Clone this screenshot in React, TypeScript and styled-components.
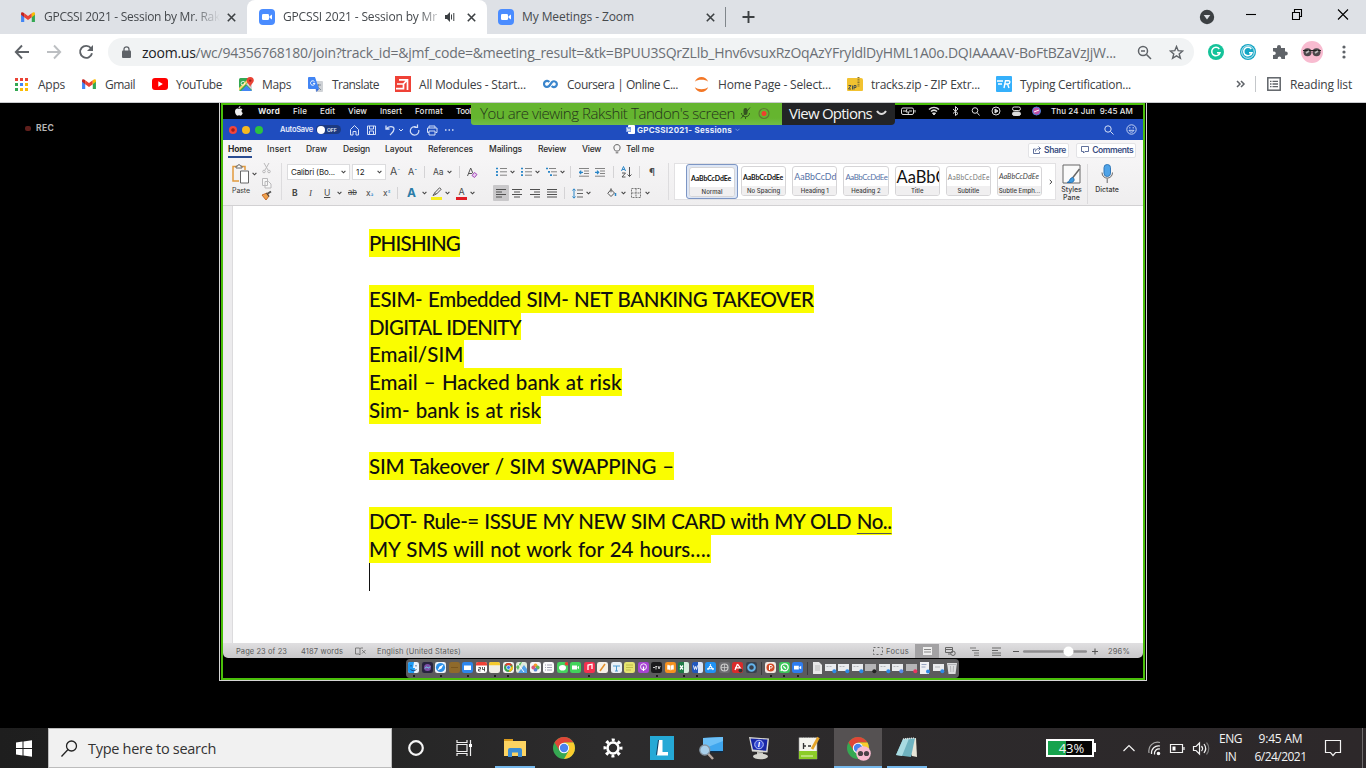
import React, { useLayoutEffect, useRef, useState } from "react";
import styled, { createGlobalStyle } from "styled-components";

const Global = createGlobalStyle`
  * { box-sizing: border-box; }
  html, body { margin: 0; padding: 0; background: #000; overflow: hidden; }
  svg { display: block; flex: none; }
`;

const ui = `"Open Sans", "Noto Sans", sans-serif`;
const mac = `Inter, "Liberation Sans", sans-serif`;

const Page = styled.div`
  width: 1366px;
  height: 768px;
  display: flex;
  flex-direction: column;
  overflow: hidden;
  font-family: ${ui};
  background: #000;
`;

const Slot = styled.div<{ $w: number; $center?: boolean }>`
  width: ${(p) => p.$w}px;
  flex: none;
  display: flex;
  align-items: center;
  justify-content: ${(p) => (p.$center ? "center" : "flex-start")};
`;

const Line = styled.span`
  display: inline-block;
  white-space: pre;
`;

/* One line of text, tracked so that it fills the given width. */
function Fit({ w, children }: { w: number; children: React.ReactNode }) {
  const ref = useRef<HTMLSpanElement>(null);
  const [tracking, setTracking] = useState(0);
  useLayoutEffect(() => {
    const el = ref.current;
    if (!el) return;
    const count = (el.textContent || "").length;
    setTracking((w - el.getBoundingClientRect().width) / count);
  }, [w]);
  return (
    <Line ref={ref} style={{ letterSpacing: tracking }}>
      {children}
    </Line>
  );
}

/* ---------- browser tabs ---------- */

const TabStrip = styled.div`
  height: 34px;
  flex: none;
  display: flex;
  background: #dee1e6;
  font-size: 12px;
  color: #45494d;
`;

const Tab = styled.div<{ $w: number; $pad: number; $active?: boolean }>`
  width: ${(p) => p.$w}px;
  padding-left: ${(p) => p.$pad}px;
  flex: none;
  display: flex;
  align-items: center;
  background: ${(p) => (p.$active ? "#fff" : "transparent")};
  border-radius: 8px 8px 0 0;
`;

const TabTitle = styled.div<{ $w: number; $fade?: boolean }>`
  width: ${(p) => p.$w}px;
  flex: none;
  overflow: hidden;
  line-height: 18px;
  ${(p) => p.$fade && "mask-image: linear-gradient(90deg, #000 84%, transparent);"}
`;

const WindowButtons = styled.div`
  margin-left: auto;
  display: flex;
  align-items: center;
  width: 167px;
`;

const GmailIcon = ({ s = 14 }: { s?: number }) => (
  <svg width={s} height={s * 0.78} viewBox="0 0 14 11">
    <path d="M0 1.5V10a1 1 0 0 0 1 1h2.2V4z" fill="#4285f4" />
    <path d="M14 1.5V10a1 1 0 0 1-1 1h-2.2V4z" fill="#34a853" />
    <path d="M3.2 1.2 7 4.1l3.8-2.9v4L7 8 3.2 5.200z" fill="#ea4335" />
    <path d="M0 1.500C0 0 1.600-.4 3.200 1.200v4L0 2.800z" fill="#c5221f" />
    <path d="M14 1.500C14 0 12.400-.4 10.800 1.200v4L14 2.800z" fill="#fbbc04" />
  </svg>
);

const ZoomIcon = () => (
  <svg width="16" height="16" viewBox="0 0 16 16">
    <rect width="16" height="16" rx="4" fill="#4a8cff" />
    <rect x="3" y="5" width="7" height="6" rx="1.3" fill="#fff" />
    <path d="M10.500 7.300 13 5.400v5.200l-2.500-1.900z" fill="#fff" />
  </svg>
);

const CloseIcon = () => (
  <svg width="9" height="9" viewBox="0 0 9 9" stroke="#3c4043" strokeWidth="1.6">
    <path d="M.8.8l7.400 7.400M8.200.8.8 8.200" />
  </svg>
);

function Tabs() {
  return (
    <TabStrip>
      <Tab $w={247} $pad={21}>
        <Slot $w={23}><GmailIcon /></Slot>
        <TabTitle $w={176} $fade><Fit w={176}>GPCSSI 2021 - Session by Mr. Rak</Fit></TabTitle>
        <Slot $w={22} $center><CloseIcon /></Slot>
      </Tab>
      <Tab $w={240} $pad={12} $active>
        <Slot $w={24}><ZoomIcon /></Slot>
        <TabTitle $w={162} $fade><Fit w={154}>GPCSSI 2021 - Session by Mr</Fit></TabTitle>
        <Slot $w={22}>
          <svg width="11" height="10" viewBox="0 0 11 10" fill="#3c4043">
            <path d="M0 3h2l3-3v10L2 7H0z" />
            <path d="M6.500 2.500v5M8.800 1v8" stroke="#3c4043" />
          </svg>
        </Slot>
        <CloseIcon />
      </Tab>
      <Tab $w={238} $pad={11}>
        <Slot $w={24}><ZoomIcon /></Slot>
        <TabTitle $w={184}><Fit w={112}>My Meetings - Zoom</Fit></TabTitle>
        <CloseIcon />
      </Tab>
      <Slot $w={17}>
        <svg width="2" height="20"><path d="M.5 0v20" stroke="#80868b" /></svg>
      </Slot>
      <svg width="13" height="34" viewBox="0 0 13 34" stroke="#3c4043" strokeWidth="1.900">
        <path d="M.5 17h12M6.500 11v12" />
      </svg>
      <WindowButtons>
        <Slot $w={38}>
          <svg width="16" height="16" viewBox="0 0 16 16">
            <circle cx="8" cy="8" r="7.200" fill="#3c4043" />
            <path d="M4.700 6h6.600L8 10.500z" fill="#dee1e6" />
          </svg>
        </Slot>
        <svg width="120" height="34" viewBox="0 0 120 34" fill="none" stroke="#000" strokeWidth="1.100">
          <path d="M9 14.500h10" />
          <path d="M55.500 12.500h7v7h-7zM57.500 12V9.500h7v7h-2" />
          <path d="M101 9.500l10 10M111 9.500l-10 10" />
        </svg>
      </WindowButtons>
    </TabStrip>
  );
}

/* ---------- address bar ---------- */

const AddressRow = styled.div`
  height: 36px;
  flex: none;
  display: flex;
  align-items: center;
  background: #fff;
  padding-left: 14px;
`;

const Omnibox = styled.div`
  width: 1086px;
  height: 28px;
  flex: none;
  border-radius: 14px;
  background: #f1f3f4;
  display: flex;
  align-items: center;
  padding-left: 14px;
  font-size: 14px;
  color: #6b6f74;
  margin-right: 14px;
`;
const Host = styled.span`color: #202124;`;

function AddressBar() {
  return (
    <AddressRow>
      <Slot $w={94}>
        <svg width="80" height="16" viewBox="0 0 80 16" fill="none" strokeWidth="1.900">
          <path d="M15 8H2M8 1.500 1.800 8 8 14.500" stroke="#5f6368" />
          <path d="M33 8h13M40 1.500 46.200 8 40 14.500" stroke="#bcbfc2" />
          <path d="M77 4.300A6 6 0 1 0 78 9.200" stroke="#5f6368" />
          <path d="M79 1v6h-6z" fill="#5f6368" />
        </svg>
      </Slot>
      <Omnibox>
        <Slot $w={20}>
          <svg width="9" height="12" viewBox="0 0 9 12">
            <path d="M2 5V3.300a2.500 2.500 0 0 1 5 0V5" fill="none" stroke="#5f6368" strokeWidth="1.300" />
            <rect y="4.500" width="9" height="7.500" rx="1" fill="#5f6368" />
          </svg>
        </Slot>
        <Slot $w={995}>
          <Fit w={974}>
            <Host>zoom.us</Host>/wc/94356768180/join?track_id=&amp;jmf_code=&amp;meeting_result=&amp;tk=BPUU3SQrZLlb_Hnv6vsuxRzOqAzYFryldlDyHML1A0o.DQIAAAAV-BoFtBZaVzJjW...
          </Fit>
        </Slot>
        <Slot $w={32}>
          <svg width="15" height="15" viewBox="0 0 15 15" fill="none" stroke="#5f6368" strokeWidth="1.500">
            <circle cx="6" cy="6" r="4.500" />
            <path d="M9.500 9.500 14 14M4 6h4" />
          </svg>
        </Slot>
        <svg width="15" height="15" viewBox="0 0 15 15" fill="none" stroke="#5f6368" strokeWidth="1.400">
          <path d="m7.500 1.500 1.700 4.200 4.500.3-3.500 2.900 1.200 4.400-3.900-2.400-3.900 2.400 1.200-4.400L1.300 6l4.500-.3z" />
        </svg>
      </Omnibox>
      <Slot $w={32}><Grammarly color="#15c39a" /></Slot>
      <Slot $w={32}><Grammarly color="#14a5c4" ring /></Slot>
      <Slot $w={29}>
        <svg width="16" height="16" viewBox="0 0 16 16" fill="#5f6368">
          <path d="M1 4h4V3a2 2 0 0 1 4 0v1h4v3.600h.8a2 2 0 0 1 0 4H13V15H9.300v-.8a1.800 1.800 0 0 0-3.600 0v.8H1v-4h1a1.800 1.800 0 0 0 0-3.600H1z" />
        </svg>
      </Slot>
      <Slot $w={41}>
        <svg width="22" height="22" viewBox="0 0 22 22">
          <circle cx="11" cy="11" r="11" fill="#f8bbd0" />
          <circle cx="6.500" cy="11.300" r="4" fill="#4c474b" />
          <circle cx="15.500" cy="11.300" r="4" fill="#4c474b" />
          <path d="M2 9.500h18" stroke="#222" />
          <path d="m5 12 3-2M14 12l3-2" stroke="#bbb" strokeWidth="1.700" />
        </svg>
      </Slot>
      <svg width="4" height="16" viewBox="0 0 4 16" fill="#5f6368">
        <circle cx="2" cy="3" r="1.600" /><circle cx="2" cy="8" r="1.600" /><circle cx="2" cy="13" r="1.600" />
      </svg>
    </AddressRow>
  );
}

const Grammarly = ({ color, ring }: { color: string; ring?: boolean }) => (
  <svg width="16" height="16" viewBox="0 0 16 16" fill="none" stroke="#fff">
    <circle cx="8" cy="8" r="8" fill={color} stroke="none" />
    {ring && <circle cx="8" cy="8" r="6.300" strokeWidth=".8" />}
    <path d="M11.300 5A4.200 4.200 0 1 0 12 8.700H9" strokeWidth="1.500" />
  </svg>
);

/* ---------- bookmarks ---------- */

const BookmarkRow = styled.div`
  height: 33px;
  flex: none;
  display: flex;
  align-items: center;
  background: #fff;
  border-bottom: 1px solid #c9cbce;
  padding: 0 0 4px 15px;
  font-size: 12px;
  color: #3c4043;
`;

const BmIcon = ({ kind }: { kind: string }) => {
  switch (kind) {
    case "apps":
      return (
        <svg width="13" height="13" viewBox="0 0 13 13">
          {["#ea4335", "#ea4335", "#ea4335", "#34a853", "#4285f4", "#fbbc04", "#34a853", "#fbbc04", "#fbbc04"].map((c, i) => (
            <rect key={i} x={(i % 3) * 5} y={Math.floor(i / 3) * 5} width="3" height="3" fill={c} />
          ))}
        </svg>
      );
    case "gmail":
      return <GmailIcon />;
    case "yt":
      return (
        <svg width="16" height="12" viewBox="0 0 16 12"><rect width="16" height="12" rx="3" fill="#f00" /><path d="M6.300 3.300v5.400L10.800 6z" fill="#fff" /></svg>
      );
    case "maps":
      return (
        <svg width="15" height="15" viewBox="0 0 15 15">
          <rect y="1" width="13" height="13" rx="1.500" fill="#34a853" />
          <path d="M13 4v9L7 7z" fill="#d5d8dc" /><path d="M2 14 7.500 8.500 13 14z" fill="#4285f4" />
          <path d="M0 12.500 11 1.500" stroke="#fdd663" strokeWidth="2" />
          <path d="M11.200 0a3.600 3.600 0 0 1 3.600 3.600c0 2-2.300 3-3.600 6.400-1.300-3.400-3.600-4.400-3.600-6.400A3.600 3.600 0 0 1 11.200 0z" fill="#ea4335" />
          <circle cx="11.200" cy="3.600" r="1.200" fill="#9c2219" />
          <path d="M5.500 4.500H4a1.800 1.800 0 1 0 1.500 1" stroke="#fff" fill="none" strokeWidth=".8" />
        </svg>
      );
    case "translate":
      return (
        <svg width="15" height="15" viewBox="0 0 15 15">
          <path d="M5 4h9a1 1 0 0 1 1 1v9a1 1 0 0 1-1 1H8z" fill="#cfd2d6" />
          <path d="M8 8h5M10.500 7v1c0 2-1.500 3-2 3.500M9 9l4 4" stroke="#7b8791" fill="none" strokeWidth=".9" />
          <path d="M1 0h6l4 12H1a1 1 0 0 1-1-1V1a1 1 0 0 1 1-1z" fill="#4285f4" />
          <path d="M6.500 4.700A2.200 2.200 0 1 0 6.900 6.400H5" stroke="#fff" fill="none" strokeWidth="1" />
          <path d="M8 12h3l-2.500 3z" fill="#3367d6" />
        </svg>
      );
    case "modules":
      return (
        <svg width="16" height="16" viewBox="0 0 16 16"><rect width="16" height="16" fill="#ef4136" /><path d="M4 3.800h8.500V14M12 4.200 8.500 8H2M8.500 8v4.700H1" stroke="#fff" fill="none" strokeWidth="1.700" /></svg>
      );
    case "coursera":
      return (
        <svg width="15" height="10" viewBox="0 0 15 10" fill="none" stroke="#3a85cc" strokeWidth="2.200"><path d="M6.300 3A3 3 0 1 0 6 7.200L9 3A2.900 2.900 0 1 1 8.700 7" /></svg>
      );
    case "jupyter":
      return (
        <svg width="15" height="15" viewBox="0 0 15 15" fill="#f37726"><path d="M.8 4.800C3-1.500 12-1.500 14.200 4.800 11 2.200 4 2.200.8 4.800zM.8 10.200c2.200 6.300 11.200 6.300 13.400 0-3.200 2.600-10.200 2.600-13.400 0z" /></svg>
      );
    case "zip":
      return (
        <svg width="16" height="14" viewBox="0 0 16 14"><path d="M0 2a1 1 0 0 1 1-1h13a2 2 0 0 1 2 2v10a1 1 0 0 1-1 1H1a1 1 0 0 1-1-1z" fill="#f2c230" /><path d="M11.500 0v10" stroke="#8d7830" strokeWidth="2" strokeDasharray="1 .7" /><path d="M1.500 8.500H4L1.500 12H4M5.500 8.500v4M7 12.500v-4h2v2H7" stroke="#49524f" strokeWidth="1" fill="none" /></svg>
      );
    default:
      return (
        <svg width="16" height="16" viewBox="0 0 16 16"><rect width="16" height="16" rx="1" fill="#35b0fb" /><path d="M1 5h6M2 8h4M8 12l1.500-7.300h3c2 0 1.800 3-.5 3.300H9.500M11.500 8l1.500 4" stroke="#fff" strokeWidth="1.400" fill="none" /></svg>
      );
  }
};

const bookmarks: [string, number, string, number, number][] = [
  ["apps", 23, "Apps", 27, 44],
  ["gmail", 23, "Gmail", 30, 47],
  ["yt", 24, "YouTube", 46, 63],
  ["maps", 23, "Maps", 29, 46],
  ["translate", 24, "Translate", 47, 63],
  ["modules", 24, "All Modules - Start...", 107, 124],
  ["coursera", 24, "Coursera | Online C...", 111, 127],
  ["jupyter", 24, "Home Page - Select...", 113, 129],
  ["zip", 24, "tracks.zip - ZIP Extr...", 109, 125],
  ["typing", 24, "Typing Certification...", 111, 216],
];

function Bookmarks() {
  return (
    <BookmarkRow>
      {bookmarks.map(([kind, iw, text, w, next]) => (
        <React.Fragment key={kind}>
          <Slot $w={iw}><BmIcon kind={kind} /></Slot>
          <Slot $w={next}><Fit w={w}>{text}</Fit></Slot>
        </React.Fragment>
      ))}
      <Slot $w={19}>
        <svg width="10" height="8" viewBox="0 0 10 8" fill="none" stroke="#5f6368" strokeWidth="1.500"><path d="m1 1 3 3-3 3M5 1l3 3-3 3" /></svg>
      </Slot>
      <Slot $w={12}><svg width="1" height="16"><rect width="1" height="16" fill="#c4c7ca" /></svg></Slot>
      <Slot $w={23}>
        <svg width="14" height="14" viewBox="0 0 14 14" fill="none" stroke="#5f6368" strokeWidth="1.500"><rect x=".8" y=".8" width="12.400" height="12.400" /><path d="M3 4.300h1.500M5.500 4.300H11M3 7h1.500M5.500 7H11M3 9.700h1.500M5.500 9.700H11" strokeWidth="1.300" /></svg>
      </Slot>
      <Fit w={62}>Reading list</Fit>
    </BookmarkRow>
  );
}

/* ---------- shared screen ---------- */

const Stage = styled.main`
  height: 625px;
  flex: none;
  display: flex;
  background: #000;
`;

const RecColumn = styled.div`
  width: 219px;
  flex: none;
  padding: 19px 0 0 25px;
  display: flex;
  align-items: flex-start;
  gap: 5px;
  font: 700 8.500px/13px ${mac};
  color: #b5b5b5;
`;
const RecDot = styled.i`
  width: 6px;
  height: 5px;
  margin-top: 4px;
  border-radius: 2px;
  background: #5f1f1c;
`;

const Frame = styled.section`
  position: relative;
  width: 928px;
  height: 578px;
  border: 1px solid #d5d5d5;
  border-top: 0;
  padding: 0 1px;
`;
const GreenEdge = styled.div`
  height: 577px;
  border: 2px solid #4abf0a;
  display: flex;
  flex-direction: column;
  overflow: hidden;
  font-family: ${mac};
`;

const MenuBar = styled.div`
  height: 14px;
  flex: none;
  display: flex;
  align-items: center;
  padding: 0 0 2px 12px;
  font-size: 8px;
  font-weight: 500;
  color: #e8e8e8;
  background: #000;
`;
const Strong = styled.b`font-weight: 700;`;

const Banner = styled.div`
  position: absolute;
  left: 251px;
  top: 0;
  height: 22px;
  display: flex;
  font: 400 15px/18px ${ui};
`;
const Viewing = styled.div`
  width: 311px;
  display: flex;
  align-items: center;
  padding: 0 0 3px 9px;
  background: linear-gradient(#65b52f, #65b52f 68%, #70bd47);
  color: #24331c;
  font-weight: 300;
  border-radius: 0 0 0 3px;
`;
const ViewOptions = styled.div`
  width: 113px;
  display: flex;
  align-items: center;
  padding: 0 0 3px 7px;
  background: #232426;
  color: #f4f4f4;
  border-radius: 0 0 4px 0;
`;

const TitleBar = styled.div`
  height: 21px;
  flex: none;
  display: flex;
  align-items: center;
  padding-left: 6px;
  background: #1f4dbf;
  color: #e8eefb;
  font-size: 7.500px;
  font-weight: 600;
`;
const Light = styled.i<{ $c: string }>`
  width: 8px;
  height: 8px;
  margin-right: 5px;
  flex: none;
  border-radius: 50%;
  background: ${(p) => p.$c};
`;
const DocTitle = styled.b`
  font-size: 8px;
  font-weight: 700;
`;
const Toggle = styled.div`
  width: 25px;
  height: 9px;
  border-radius: 5px;
  background: #1d3a80;
  display: flex;
  align-items: center;
  gap: 2px;
  padding-left: 1px;
  font-size: 5px;
  &::before { content: ""; width: 8px; height: 8px; border-radius: 50%; background: #fff; }
`;

const RibbonTabs = styled.div`
  height: 18px;
  flex: none;
  display: flex;
  align-items: center;
  padding-left: 5px;
  background: #f6f5f6;
  color: #2c2c2c;
  font-size: 8.500px;
  font-weight: 500;
`;
const ActiveTab = styled.div`
  height: 18px;
  display: flex;
  align-items: center;
  border-bottom: 2px solid #2b4d92;
  padding-top: 1px;
  font-weight: 700;
`;
const RibbonButton = styled.div<{ $w: number }>`
  width: ${(p) => p.$w}px;
  height: 15px;
  margin: 2px 7px 0 0;
  padding-left: 4px;
  display: flex;
  align-items: center;
  gap: 3px;
  border: 1px solid #e3e3e6;
  border-radius: 2px;
  background: #fff;
  color: #3a4e83;
  font-weight: 600;
`;

const Ribbon = styled.div`
  height: 48px;
  flex: none;
  display: flex;
  background: linear-gradient(#f6f5f6, #efeeef);
  border-bottom: 1px solid #d2d1d3;
  color: #3b3b3b;
`;
const GroupRule = styled.div`
  width: 1px;
  height: 37px;
  margin-top: 5px;
  flex: none;
  background: #dddcde;
`;
const Group = styled.div<{ $w: number; $pad?: number }>`
  width: ${(p) => p.$w}px;
  flex: none;
  padding: 6px 0 0 ${(p) => p.$pad || 0}px;
  display: flex;
  flex-direction: column;
  gap: 5px;
`;
const ToolRow = styled.div`
  height: 16px;
  display: flex;
  align-items: center;
`;
const Select = styled.div<{ $w: number }>`
  width: ${(p) => p.$w}px;
  height: 16px;
  flex: none;
  margin-right: 2px;
  padding: 0 3px;
  display: flex;
  align-items: center;
  justify-content: space-between;
  border: 1px solid #dcdcde;
  background: #fff;
  font-size: 8px;
  color: #222;
`;
const Glyph = styled.span<{ $size?: number; $bold?: boolean; $italic?: boolean; $line?: string; $color?: string }>`
  font-size: ${(p) => p.$size || 9}px;
  line-height: 10px;
  font-weight: ${(p) => (p.$bold ? 700 : 400)};
  font-style: ${(p) => (p.$italic ? "italic" : "normal")};
  font-family: ${(p) => (p.$italic ? '"Liberation Serif", serif' : "inherit")};
  text-decoration: ${(p) => p.$line || "none"};
  color: ${(p) => p.$color || "#484848"};
`;
const Underbar = styled.div<{ $c: string }>`
  width: 11px;
  height: 13px;
  display: flex;
  justify-content: center;
  border-bottom: 3px solid ${(p) => p.$c};
`;
const PasteBox = styled.div`
  width: 28px;
  padding: 1px 0 0 1px;
  font-size: 7px;
  display: flex;
  flex-direction: column;
  gap: 2px;
`;
const PasteGroup = styled.div`
  width: 58px;
  flex: none;
  display: flex;
  padding: 5px 0 0 8px;
`;
const Pressed = styled.div`
  width: 16px;
  height: 16px;
  margin-right: 3px;
  display: flex;
  align-items: center;
  justify-content: center;
  background: #c9c8ca;
  border-radius: 1px;
`;

const Gallery = styled.div`
  width: 382px;
  height: 37px;
  margin: 5px 0 0 5px;
  flex: none;
  display: flex;
  align-items: center;
  background: #fff;
  border: 1px solid #e2e1e3;
  padding-left: 11px;
`;
const StyleCell = styled.div<{ $on?: boolean }>`
  width: ${(p) => (p.$on ? 52 : 51.200)}px;
  height: 35px;
  flex: none;
  padding: 2px ${(p) => (p.$on ? 2 : 3)}px;
  border: ${(p) => (p.$on ? "1px solid #7d96c4" : "0")};
  border-radius: 3px;
  background: ${(p) => (p.$on ? "#dde6f5" : "transparent")};
`;
const StyleCard = styled.div`
  height: 30px;
  display: flex;
  flex-direction: column;
  border: 1px solid #d6d5d7;
  border-radius: 3px;
  overflow: hidden;
  background: #fff;
`;
const Sample = styled.div<{ $size: number; $color: string; $italic?: boolean; $bold?: boolean }>`
  flex: 1;
  padding-left: 1px;
  display: flex;
  align-items: center;
  white-space: nowrap;
  overflow: hidden;
  line-height: 18px;
  font-family: Lato, sans-serif;
  font-weight: ${(p) => (p.$bold ? 700 : 400)};
  font-size: ${(p) => p.$size}px;
  font-style: ${(p) => (p.$italic ? "italic" : "normal")};
  color: ${(p) => p.$color};
`;
const StyleName = styled.div`
  height: 9px;
  background: #f0eff0;
  text-align: center;
  font: 500 6px/9px ${mac};
  white-space: nowrap;
`;
const Tall = styled.div<{ $w: number; $line?: boolean }>`
  width: ${(p) => p.$w}px;
  height: 40px;
  margin-top: 6px;
  flex: none;
  display: flex;
  flex-direction: column;
  align-items: center;
  gap: 2px;
  border-left: ${(p) => (p.$line ? "1px solid #dcdbdd" : "0")};
  font: 500 7px/8px ${mac};
  text-align: center;
`;

const Chev = () => (
  <svg width="5" height="4" viewBox="0 0 5 4" fill="none" stroke="#444" strokeWidth="1.100"><path d="m.6.8 1.900 2L4.400.8" /></svg>
);
const Sep = () => <svg width="1" height="12"><rect width="1" height="12" fill="#d4d3d5" /></svg>;

const Lines = ({ kind }: { kind: "left" | "center" | "right" | "full" }) => {
  const d = {
    left: "M0 .5h10M0 3h6M0 5.500h10M0 8h6",
    center: "M0 .5h10M2 3h6M0 5.500h10M2 8h6",
    right: "M0 .5h10M4 3h6M0 5.500h10M4 8h6",
    full: "M0 .5h10M0 3h10M0 5.500h10M0 8h10",
  }[kind];
  return <svg width="10" height="9" viewBox="0 0 10 9" stroke="#505050"><path d={d} /></svg>;
};
const ListIcon = ({ stepped }: { stepped?: boolean }) => (
  <svg width="11" height="10" viewBox="0 0 11 10">
    <path d={stepped ? "M0 1.500h2M2 4.800h2M4 8.200h2" : "M0 1.500h2M0 4.800h2M0 8.200h2"} stroke="#2a86c8" strokeWidth="1.700" />
    <path d={stepped ? "M3 1.500h7M5 4.800h6M7 8.200h4" : "M4 1.500h7M4 4.800h7M4 8.200h7"} stroke="#777" strokeWidth=".9" />
  </svg>
);
const IndentIcon = ({ flip }: { flip?: boolean }) => (
  <svg width="10" height="9" viewBox="0 0 10 9" fill="none">
    <path d="M0 .5h10M5 3h5M5 5.500h5M0 8.200h10" stroke="#777" strokeWidth=".9" />
    <path d={flip ? "M0 4.300h3.500M2 2.600l1.700 1.700L2 6" : "M4 4.300H.5M2.200 2.600.5 4.300 2.200 6"} stroke="#2a86c8" strokeWidth="1.200" />
  </svg>
);

/* ---------- document ---------- */

const DocArea = styled.div`
  height: 437px;
  flex: none;
  display: flex;
  background: #ecebed;
  padding-left: 9px;
`;
const Paper = styled.div`
  flex: 1;
  padding: 23px 0 0 136px;
  background: #fff;
  border-left: 1px solid #dcdbdd;
  font-family: Lato, "Liberation Sans", sans-serif;
  font-size: 20.500px;
  font-weight: 500;
  word-spacing: 1px;
  color: #101010;
`;
const Para = styled.div`
  height: 27.850px;
  display: flex;
`;
const Mark = styled.span`
  height: 27.850px;
  line-height: 29px;
  background: #fafd00;
`;
const Under = styled.u`
  text-decoration-thickness: 1px;
  text-decoration-color: #555;
  text-underline-offset: 4px;
`;
const Caret = styled.div`
  width: 1px;
  height: 28px;
  background: #111;
`;

const docLines: [React.ReactNode, number][] = [
  ["PHISHING", 91],
  [null, 0],
  ["ESIM- Embedded SIM- NET BANKING TAKEOVER", 444.5],
  ["DIGITAL IDENITY", 152],
  ["Email/SIM", 94.5],
  ["Email – Hacked bank at risk", 252.5],
  ["Sim- bank is at risk", 172],
  [null, 0],
  ["SIM Takeover / SIM SWAPPING –", 305],
  [null, 0],
  [<>DOT- Rule-= ISSUE MY NEW SIM CARD with MY OLD <Under>No..</Under></>, 522.5],
  ["MY SMS will not work for 24 hours….", 341.5],
];

const StatusBar = styled.div`
  height: 15px;
  flex: none;
  display: flex;
  align-items: center;
  padding: 1px 0 0 13px;
  background: linear-gradient(#e0dfe1, #c8c7c9);
  border-radius: 0 0 5px 5px;
  font-size: 7.500px;
  color: #5a5a5a;
`;
const StatusOn = styled.div`
  width: 24px;
  height: 14px;
  margin-left: 6px;
  display: flex;
  align-items: center;
  justify-content: center;
  background: #a3a2a4;
`;

const Dock = styled.div`
  width: 553px;
  height: 19px;
  margin: 1px 0 0 183px;
  flex: none;
  display: flex;
  align-items: center;
  padding-left: 1px;
  border-radius: 4px;
  background: #5b5b5d;
`;
const DockCell = styled.div<{ $dot?: boolean }>`
  width: 13.500px;
  height: 19px;
  flex: none;
  display: flex;
  flex-direction: column;
  align-items: center;
  padding-top: 3px;
  gap: 2px;
  &::after {
    content: "";
    width: 2px;
    height: 2px;
    border-radius: 50%;
    background: ${(p) => (p.$dot ? "#0a0a0a" : "transparent")};
  }
`;
const DockSep = styled.i<{ $w: number }>`
  width: ${(p) => p.$w}px;
  height: 13px;
  flex: none;
  background: linear-gradient(#3c3c3e, #3c3c3e) center / 1px 100% no-repeat;
`;

type DockArt = [string, string, React.ReactNode, boolean?];
const w1 = { fill: "none", stroke: "#fff", strokeWidth: 1.3 };
const dockApps: DockArt[] = [
  ["finder", "#e8f1fb", <><path d="M0 2a2 2 0 0 1 2-2h4L5 6h2l-1 5H2a2 2 0 0 1-2-2z" fill="#1d9bf6" /><path d="M3 3v1.500M8 3v1.500M2.500 7.500c2 1.500 4 1.500 6 0" stroke="#1b3560" fill="none" strokeWidth=".8" /></>, true],
  ["siri", "#28233f", <><circle cx="5.500" cy="5.500" r="3.500" fill="#7c4fa8" /><path d="M3 6.500c2-4 3 2 5-2" stroke="#6fe3f0" fill="none" /></>],
  ["safari", "#eef4fb", <><circle cx="5.500" cy="5.500" r="4.600" fill="#2b8fe8" /><path d="m8.500 2.500-2 4-4 2 2-4z" fill="#fff" /></>, true],
  ["wood", "#8f6a2b", <path d="M2 5.500h7" stroke="#7a561e" />],
  ["mail", "#2d86ee", <path d="M2 3.500h7v4.500H2z" fill="#fff" />, true],
  ["cal", "#fff", <><path d="M0 2a2 2 0 0 1 2-2h7a2 2 0 0 1 2 2v1.500H0z" fill="#ee4136" /><path d="M2.500 5.500h2v1.700h-2V9h2M6.500 5v2.500h2.200M8.500 5v4.300" stroke="#333" strokeWidth=".8" fill="none" /></>],
  ["notes", "#f0eee6", <path d="M0 2a2 2 0 0 1 2-2h7a2 2 0 0 1 2 2v1.300H0z" fill="#f4c92d" />, true],
  ["chrome", "#f4f4f4", <><circle cx="5.500" cy="5.500" r="4.500" fill="#35a554" /><path d="M1.500 3.500a4.500 4.500 0 0 1 8 0z" fill="#e5392c" /><path d="M9.700 3.800A4.500 4.500 0 0 1 5.500 10l2-4z" fill="#fbc116" /><circle cx="5.500" cy="5.500" r="2" fill="#3d7df0" stroke="#fff" strokeWidth=".7" /></>, true],
  ["maps", "#dfeadb", <><path d="M0 5 5 0h1L2 8z" fill="#5fbf62" /><path d="M2 11 8 3l3 4v4z" fill="#53a4ea" /><path d="m2 2 6 8" stroke="#fff" /></>],
  ["photos", "#f6f6f6", <><circle cx="5.500" cy="3.300" r="1.900" fill="#f49b2c" /><circle cx="7.700" cy="5.500" r="1.900" fill="#62b952" /><circle cx="5.500" cy="7.700" r="1.900" fill="#5287d4" /><circle cx="3.300" cy="5.500" r="1.900" fill="#d95777" /></>],
  ["remind", "#fbfbfb", <path d="M2 3h1M4 3h5M2 5.500h1M4 5.500h5M2 8h1M4 8h5" stroke="#8c8ca0" strokeWidth=".8" />],
  ["messages", "#45d35e", <><ellipse cx="5.500" cy="5.700" rx="3.500" ry="2.800" fill="#fff" /><circle cx="9.500" cy="1.800" r="1.800" fill="#f23b30" /></>],
  ["facetime", "#41d35b", <path d="M2 3.500h5v4H2zM7.500 5 9 3.800v3.400L7.500 6z" fill="#fff" />],
  ["music", "#f5304f", <path d="M4 8V3l4-.8V7" {...w1} />, true],
  ["pages", "#f6f2e8", <path d="M3 9 8 2" stroke="#e4912c" strokeWidth="1.500" />],
  ["keynote", "#e9f0f5", <path d="M2 4h7M5.500 4v5M4 9h3" stroke="#4a9bd1" fill="none" />],
  ["stickies", "#e6e570", <path d="M2 3h7M2 5.500h7M2 8h5" stroke="#b8b340" strokeWidth=".8" />],
  ["podcast", "#a843d3", <><circle cx="5.500" cy="4.800" r="3" {...w1} strokeWidth=".9" /><path d="M5.500 4.500V9" {...w1} /></>],
  ["tv", "#1b1b1d", <path d="M2 5.500h2M5 4v3.500M4.500 4.500H6M7 4l1 3 1.200-3" stroke="#ddd" fill="none" strokeWidth=".9" />, true],
  ["books", "#f6911e", <path d="M5.500 3.500C4 2.600 3 2.700 2 3v5c1-.3 2-.3 3.500.6C7 7.700 8 7.700 9 8V3c-1-.3-2-.4-3.500.5zv5" fill="#fff" stroke="#f6911e" strokeWidth=".5" />],
  ["excel", "#1f7c47", <><path d="M6 0h3a2 2 0 0 1 2 2v7a2 2 0 0 1-2 2H6z" fill="#d7efe0" /><path d="m2 3.500 3 4M5 3.500l-3 4" {...w1} /></>, true],
  ["word", "#2158bd", <><path d="M6 0h3a2 2 0 0 1 2 2v7a2 2 0 0 1-2 2H6z" fill="#dbe7fa" /><path d="m1.500 3.500 1 4 1-3 1 3 1-4" {...w1} strokeWidth=".9" /></>, true],
  ["store", "#2092f4", <path d="m5.800 2.500-3 5.500M5 2.500 8.200 8M2 6.700h7" {...w1} strokeWidth="1.100" />],
  ["settings", "#6c6c70", <><circle cx="5.500" cy="5.500" r="3.500" fill="none" stroke="#ccc" strokeWidth="1.200" /><path d="M5.500 2v7M2 5.500h7" stroke="#ccc" strokeWidth=".8" /></>],
  ["acrobat", "#d92b2b", <><path d="M5.500 2 3 8M5.500 2 9 7M3 5.800h5" {...w1} /><circle cx="8.500" cy="8.500" r="2" fill="#333" /></>],
  ["quick", "#37404d", <circle cx="5.500" cy="5.500" r="3.300" fill="none" stroke="#63b4ec" strokeWidth="2" />],
];
const dockMid: DockArt[] = [
  ["ppt", "#f3e9e4", <><circle cx="5.500" cy="5.500" r="4" fill="#d24b27" /><path d="M4.500 8V3.500h1.700c1.500 0 1.500 2.500 0 2.500H4.500" {...w1} strokeWidth="1" /></>, true],
  ["whatsapp", "#3bc659", <><circle cx="5.700" cy="5.300" r="3.500" {...w1} /><path d="m4.300 4.300 2.500 2.500M2 9l.7-2" {...w1} /></>, true],
  ["zoom", "#2e7cf1", <path d="M2 3.700h4.800v3.800H2zM7.400 5 9.200 3.700v3.600L7.400 6.200z" fill="#fff" />, true],
];
const windowsMin = ["#2e8ae6", "#2e8ae6", "#2e8ae6", "#222", "#2e8ae6", "#5a8de8", "#e83560"];

const AppTile = ({ bg, art }: { bg: string; art: React.ReactNode }) => (
  <svg width="11" height="11" viewBox="0 0 11 11"><rect width="11" height="11" rx="2.300" fill={bg} />{art}</svg>
);

function WordMenu() {
  return (
    <MenuBar>
      <Slot $w={23}>
        <svg width="8" height="10" viewBox="0 0 8 10" fill="#f0f0f0"><path d="M5.400 0c.1 1.200-.8 2.100-1.800 2.100C3.500 1.100 4.400.1 5.400 0zM7.500 3.300c-1.500 1-1.200 3 .3 3.700C7.200 8.600 6.300 9.700 5.500 9.700c-.7 0-.8-.4-1.500-.4s-.9.4-1.500.4C1.300 9.700 0 7.600 0 5.600 0 2.500 2.500 2 3.900 2.900 5.300 2 6.900 2.500 7.500 3.300z" /></svg>
      </Slot>
      <Slot $w={35}><Fit w={22}><Strong>Word</Strong></Fit></Slot>
      <Slot $w={27}><Fit w={14}>File</Fit></Slot>
      <Slot $w={28}><Fit w={15}>Edit</Fit></Slot>
      <Slot $w={32}><Fit w={19}>View</Fit></Slot>
      <Slot $w={35}><Fit w={22}>Insert</Fit></Slot>
      <Slot $w={41}><Fit w={28}>Format</Fit></Slot>
      <Slot $w={445}><Fit w={19}>Tools</Fit></Slot>
      <Slot $w={150}>
        <svg width="144" height="12" viewBox="0 0 144 12" fill="none" stroke="#dcdcdc" strokeWidth="1">
          <rect x=".5" y="3" width="12" height="6.500" rx="1.500" /><path d="M2 6h3M8 6h3M6 4l-1 3h3L7 9" /><path d="M14 5v2.500" />
          <path d="M28 4.500c3-2.700 7-2.700 10 0M30 6.500c2-1.800 4-1.800 6 0" strokeWidth="1.500" /><path d="m31.500 8 1.500 2 1.500-2z" fill="#ddd" />
          <path d="m52 4 5 4.500-2.500 2V1.500L57 4 52 8.500" />
          <circle cx="74" cy="5.500" r="2.800" /><path d="m76 7.500 2.500 3" />
          <circle cx="95" cy="6" r="4" /><path d="m94 4 3 2-3 2z" fill="#ddd" />
          <rect x="111.500" y="2" width="8" height="3.500" rx="1.700" /><rect x="111.500" y="7" width="8" height="3.500" rx="1.700" fill="#ddd" />
          <circle cx="135.500" cy="6" r="4" fill="#c04fa8" stroke="#4a7fd8" /><path d="m133 7 5-2" stroke="#fff" />
        </svg>
      </Slot>
      <Fit w={82}>Thu 24 Jun  9:45 AM</Fit>
    </MenuBar>
  );
}

function WordTitle() {
  return (
    <TitleBar>
      <Light $c="radial-gradient(#a51d1a 22%, #f2453c 40%)" /><Light $c="#f5b921" /><Light $c="#2bc23f" />
      <Slot $w={12} />
      <Slot $w={36}><Fit w={33}>AutoSave</Fit></Slot>
      <Slot $w={33}><Toggle>OFF</Toggle></Slot>
      <Slot $w={277}>
        <svg width="106" height="12" viewBox="0 0 106 12" fill="none" stroke="#d5e0f7" strokeWidth="1">
          <path d="M1.500 5.500 5.500 1.500l4 4V11H7V7.500H4V11H1.500z" />
          <path d="M18.500 2h8v8.500h-8zM20.500 2v3h4V2M20.500 10.500V7h4v3.500" />
          <path d="M37 1.500V5h3.500M37.500 5C39 2 45 1.500 45 5c0 2.500-2 4-4 6" strokeWidth="1.300" />
          <path d="m50 5 2 2 2-2" />
          <path d="M67.500 3A4.300 4.300 0 1 0 69.800 6M68.500.5v3H65.500" strokeWidth="1.200" />
          <path d="M80 4V2h6v2M80 8.500h-1.500V4h9.500v4.500h-1.500M80 7h6v4h-6z" />
          <path d="M96 6h1.500M99.500 6h1.500M103 6h1.500" strokeWidth="1.500" />
        </svg>
      </Slot>
      <Slot $w={11}>
        <svg width="9" height="9" viewBox="0 0 9 9"><rect x="2" width="7" height="9" rx="1" fill="#fff" /><rect y="2" width="5" height="5" fill="#7ea1e6" /><path d="m1 3 1 3 1-2 1 2" stroke="#fff" strokeWidth=".7" fill="none" /></svg>
      </Slot>
      <Slot $w={98}><Fit w={95}><DocTitle>GPCSSI2021- Sessions</DocTitle></Fit></Slot>
      <Slot $w={369}><svg width="5" height="4" viewBox="0 0 5 4" fill="none" stroke="#6f92de"><path d="m.5.8 2 2 2-2" /></svg></Slot>
      <Slot $w={22}><svg width="10" height="10" viewBox="0 0 10 10" fill="none" stroke="#d5e0f7"><circle cx="4" cy="4" r="3.200" /><path d="m6.500 6.500 3 3" /></svg></Slot>
      <svg width="11" height="11" viewBox="0 0 11 11" fill="none" stroke="#d5e0f7" strokeWidth=".9"><circle cx="5.500" cy="5.500" r="4.700" /><path d="M3 6.300c1 2.500 4 2.500 5 0zM3.800 3v1.500M7.200 3v1.500" /></svg>
    </TitleBar>
  );
}

const ribbonNames: [string, number, number][] = [
  ["Insert", 24, 39], ["Draw", 21, 37], ["Design", 27, 42], ["Layout", 27, 43], ["References", 45, 61],
  ["Mailings", 33, 49], ["Review", 28, 44], ["View", 19, 31],
];

type StyleDef = { name: string; size: number; color: string; w?: number; italic?: boolean; bold?: boolean };
const styleDefs: StyleDef[] = [
  { name: "Normal", size: 7, color: "#111", w: 40, bold: true },
  { name: "No Spacing", size: 7, color: "#111", w: 40, bold: true },
  { name: "Heading 1", size: 8.8, color: "#5470a5" },
  { name: "Heading 2", size: 7.8, color: "#5470a5", w: 42 },
  { name: "Title", size: 16.5, color: "#111" },
  { name: "Subtitle", size: 6.6, color: "#777", w: 42 },
  { name: "Subtle Emph...", size: 7.2, color: "#444", w: 40, italic: true },
];

function WordRibbon() {
  return (
    <>
      <RibbonTabs>
        <Slot $w={39}><ActiveTab><Fit w={24}>Home</Fit></ActiveTab></Slot>
        {ribbonNames.map(([n, w, s]) => <Slot key={n} $w={s}><Fit w={w}>{n}</Fit></Slot>)}
        <Slot $w={13}>
          <svg width="8" height="10" viewBox="0 0 8 10" fill="none" stroke="#555" strokeWidth=".9"><path d="M2.500 7C.2 5 .2.600 4 .600S7.800 5 5.500 7zM2.700 8.800h2.600" /></svg>
        </Slot>
        <Slot $w={402}><Fit w={28}>Tell me</Fit></Slot>
        <RibbonButton $w={42}>
          <svg width="8" height="8" viewBox="0 0 8 8" fill="none" stroke="#3a4e83" strokeWidth=".8"><path d="M2.500 3H.5v4.500h6V5.500M2.500 5.500C2.500 3 4 2.500 7.500 2.500M5.500.5l2 2-2 2" /></svg>
          <Fit w={22}>Share</Fit>
        </RibbonButton>
        <RibbonButton $w={61}>
          <svg width="8" height="8" viewBox="0 0 8 8" fill="none" stroke="#3a4e83" strokeWidth=".8"><path d="M.5.5h7v5H4L2.500 7V5.500h-2z" /></svg>
          <Fit w={41}>Comments</Fit>
        </RibbonButton>
      </RibbonTabs>
      <Ribbon>
        <PasteGroup>
          <PasteBox>
            <Slot $w={27}>
              <Slot $w={20}>
                <svg width="18" height="20" viewBox="0 0 18 20" fill="none"><path d="M5 2.500H1V17h6" stroke="#e29a3e" strokeWidth="1.500" /><path d="M9 2.500h4V6" stroke="#e29a3e" strokeWidth="1.500" /><path d="M4 4V2.200h1.500a1.500 1.500 0 0 1 3 0H10V4z" fill="#fff" stroke="#666" /><path d="M8.500 7h8v12h-8z" fill="#fff" stroke="#666" /></svg>
              </Slot>
              <Chev />
            </Slot>
            <Slot $w={20}><Fit w={18}>Paste</Fit></Slot>
          </PasteBox>
          <svg width="16" height="40" viewBox="-2 0 16 40" fill="none" stroke="#b9b8ba">
            <path d="M3 0l4 7M8 0 4 7" /><circle cx="3" cy="8.500" r="1.300" /><circle cx="8" cy="8.500" r="1.300" />
            <path d="M1.500 15.500h5v7h-5zM4 18.500h3.500l2.500 2.500v4H4z" fill="#f7f7f7" />
            <path d="m6 31 4-2.500" stroke="#555" strokeWidth="2" /><path d="m1 32 5-2 2 3-3 4z" fill="#f0a04a" stroke="#c56b2b" /><path d="m5.500 30 2.500 3.500" stroke="#444" strokeWidth="1.200" />
          </svg>
        </PasteGroup>
        <GroupRule />
        <Group $w={211} $pad={5}>
          <ToolRow>
            <Select $w={63}><Fit w={44}>Calibri (Bo...</Fit><Chev /></Select>
            <Select $w={34}><Fit w={9}>12</Fit><Chev /></Select>
            <Slot $w={2} />
            <Slot $w={18}><Glyph $size={10.5}>A</Glyph><Glyph $size={7} $color="#2a86c8">ˆ</Glyph></Slot>
            <Slot $w={16}><Glyph $size={9}>A</Glyph><Glyph $size={7} $color="#2a86c8">ˇ</Glyph></Slot>
            <Slot $w={9}><Sep /></Slot>
            <Slot $w={14}><Glyph $size={8.5}>Aa</Glyph></Slot>
            <Slot $w={12}><Chev /></Slot>
            <Slot $w={8}><Sep /></Slot>
            <svg width="11" height="11" viewBox="0 0 11 11" fill="none"><path d="m.5 9 3.200-8L6 6.500M1.500 6.500H5" stroke="#555" /><path d="m5 8.500 2.500-3 2.500 2-2.500 3z" fill="#e8cdf0" stroke="#a349b8" /></svg>
          </ToolRow>
          <ToolRow>
            <Slot $w={5} />
            <Slot $w={17}><Glyph $size={8.5} $bold>B</Glyph></Slot>
            <Slot $w={15}><Glyph $italic>I</Glyph></Slot>
            <Slot $w={13}><Glyph $size={8.5} $line="underline">U</Glyph></Slot>
            <Slot $w={11}><Chev /></Slot>
            <Slot $w={18}><Glyph $size={7.5} $line="line-through">ab</Glyph></Slot>
            <Slot $w={17}><Glyph $size={8.5}>x</Glyph><Glyph $size={6} $color="#2a86c8">₂</Glyph></Slot>
            <Slot $w={14}><Glyph $size={8.5}>x</Glyph><Glyph $size={6} $color="#2a86c8">²</Glyph></Slot>
            <Slot $w={10}><Sep /></Slot>
            <Slot $w={15}><Glyph $size={12} $bold $color="#2b7ca8">A</Glyph></Slot>
            <Slot $w={9}><Chev /></Slot>
            <Slot $w={14}>
              <Underbar $c="#f6ee1e"><svg width="10" height="9" viewBox="0 0 10 9" fill="none" stroke="#555"><path d="M3 5.500 7.500.8l1.700 1.500L4.500 7zM3 5.500 1 8.500l3.500-1.500" /></svg></Underbar>
            </Slot>
            <Slot $w={11}><Chev /></Slot>
            <Slot $w={14}><Underbar $c="#e01b24"><Glyph>A</Glyph></Underbar></Slot>
            <Chev />
          </ToolRow>
        </Group>
        <Group $w={175}>
          <ToolRow>
            <Slot $w={3} />
            <Slot $w={14}><ListIcon /></Slot><Slot $w={11}><Chev /></Slot>
            <Slot $w={14}><ListIcon /></Slot><Slot $w={11}><Chev /></Slot>
            <Slot $w={14}><ListIcon stepped /></Slot><Slot $w={10}><Chev /></Slot>
            <Slot $w={9}><Sep /></Slot>
            <Slot $w={16}><IndentIcon /></Slot>
            <Slot $w={18}><IndentIcon flip /></Slot>
            <Slot $w={8}><Sep /></Slot>
            <Slot $w={18}>
              <svg width="11" height="12" viewBox="0 0 11 12" fill="none"><path d="m.5 5 2-4.500L4.500 5M1.200 3.500h2.600" stroke="#2a86c8" /><path d="M1 7h3.500L1 11h3.500" stroke="#555" /><path d="M8.500 1v9.500M6.500 8.500l2 2 2-2" stroke="#555" /></svg>
            </Slot>
            <Slot $w={10}><Sep /></Slot>
            <Glyph $size={10}>¶</Glyph>
          </ToolRow>
          <ToolRow>
            <Pressed><Lines kind="left" /></Pressed>
            <Slot $w={18}><Lines kind="center" /></Slot>
            <Slot $w={17}><Lines kind="right" /></Slot>
            <Slot $w={17}><Lines kind="full" /></Slot>
            <Slot $w={8}><Sep /></Slot>
            <Slot $w={14}>
              <svg width="11" height="11" viewBox="0 0 11 11" fill="none"><path d="M2 1v9M.5 2.500 2 .8l1.500 1.700M.5 8.500 2 10.200l1.500-1.700" stroke="#2a86c8" /><path d="M5 2h6M5 5.500h6M5 9h6" stroke="#666" /></svg>
            </Slot>
            <Slot $w={21}><Chev /></Slot>
            <Slot $w={14}>
              <svg width="10" height="10" viewBox="0 0 10 10" fill="none" stroke="#555"><path d="M4 1.500 7.500 5 4 8.500.8 5.300zM4 .3v4" /><path d="M8.500 5v3" stroke="#2a86c8" strokeWidth="1.500" /></svg>
            </Slot>
            <Slot $w={10}><Chev /></Slot>
            <Slot $w={14}>
              <svg width="10" height="10" viewBox="0 0 10 10" fill="none" stroke="#777"><path d="M.5.5h9v9h-9zM5 .5v9M.5 5h9" strokeDasharray="2 1" /></svg>
            </Slot>
            <Chev />
          </ToolRow>
        </Group>
        <GroupRule />
        <Gallery>
          {styleDefs.map((s, i) => (
            <StyleCell key={s.name} $on={i === 0}>
              <StyleCard>
                <Sample $size={s.size} $color={s.color} $italic={s.italic} $bold={s.bold}>
                  {s.w ? <Fit w={s.w}>AaBbCcDdEe</Fit> : "AaBbCcDdEe"}
                </Sample>
                <StyleName>{s.name}</StyleName>
              </StyleCard>
            </StyleCell>
          ))}
          <Slot $w={11} $center>
            <svg width="4" height="6" viewBox="0 0 4 6" fill="none" stroke="#444"><path d="m.8.800 2 2.200-2 2.200" /></svg>
          </Slot>
        </Gallery>
        <Tall $w={31}>
          <svg width="19" height="20" viewBox="0 0 19 20" fill="none"><path d="M1 1h17v18H1z" stroke="#666" fill="#fafafa" /><path d="m17.500 5-7 9" stroke="#666" strokeWidth="1.500" /><path d="M5 18.500c3 0 2-4.500 5.500-5 2.500 1 2 4.500-1 5z" fill="#3f9be0" stroke="#2a6fae" /></svg>
          <div>Styles<br />Pane</div>
        </Tall>
        <Tall $w={39} $line>
          <svg width="12" height="20" viewBox="0 0 12 20" fill="none"><rect x="3" y=".5" width="6.500" height="12" rx="3.200" fill="#4ea3e8" stroke="#3379b8" /><path d="M1 8.500c0 7.500 10.500 7.500 10.500 0M6.200 14.500V19" stroke="#666" /></svg>
          <div>Dictate</div>
        </Tall>
      </Ribbon>
    </>
  );
}

function SharedScreen() {
  return (
    <Frame>
      <GreenEdge>
        <WordMenu />
        <WordTitle />
        <WordRibbon />
        <DocArea>
          <Paper>
            {docLines.map(([text, w], i) => (
              <Para key={i}>{text && <Mark><Fit w={w}>{text}</Fit></Mark>}</Para>
            ))}
            <Caret />
          </Paper>
        </DocArea>
        <StatusBar>
          <Slot $w={65}><Fit w={51}>Page 23 of 23</Fit></Slot>
          <Slot $w={54}><Fit w={42}>4187 words</Fit></Slot>
          <Slot $w={22}><svg width="11" height="8" viewBox="0 0 11 8" fill="none" stroke="#666" strokeWidth=".8"><path d="M4 1H.5v6H4L5 8V1.500L4 1M5 1.500 6 1h2M7 3l3.500 3.500M10.500 3 7 6.500" /></svg></Slot>
          <Slot $w={496}><Fit w={84}>English (United States)</Fit></Slot>
          <Slot $w={13}><svg width="10" height="8" viewBox="0 0 10 8" fill="none" stroke="#666"><rect x=".5" y=".5" width="9" height="7" strokeDasharray="2 2" /></svg></Slot>
          <Slot $w={23}><Fit w={23}>Focus</Fit></Slot>
          <StatusOn><svg width="9" height="8" viewBox="0 0 9 8"><rect width="9" height="8" fill="#eee" /><path d="M1 2.500h7M1 5h7" stroke="#888" /></svg></StatusOn>
          <Slot $w={6} />
          <Slot $w={25}>
            <svg width="11" height="9" viewBox="0 0 11 9" fill="none" stroke="#666"><path d="M.5.500h7v5h-7zM1 2.500h6M3 7h3" /><circle cx="8" cy="6.300" r="2.200" /></svg>
          </Slot>
          <Slot $w={22}><svg width="9" height="9" viewBox="0 0 9 9" stroke="#777"><path d="M0 1h6M2 3.500h7M4 6h5M4 8.300h5" /></svg></Slot>
          <Slot $w={21}><svg width="9" height="9" viewBox="0 0 9 9" stroke="#666"><path d="M0 1h9M0 3.500h6M0 6h9M0 8.300h9" /></svg></Slot>
          <Slot $w={95}>
            <svg width="86" height="11" viewBox="0 0 86 11"><path d="M0 5.500h6M79 5.500h6M82 2.500v6" stroke="#555" strokeWidth="1.100" /><rect x="10" y="4.300" width="64" height="2.400" rx="1.200" fill="#8e8d8f" /><circle cx="55.500" cy="5.500" r="5" fill="#fff" /></svg>
          </Slot>
          <Fit w={22}>296%</Fit>
        </StatusBar>
        <Dock>
          {dockApps.map(([id, bg, art, dot]) => <DockCell key={id} $dot={dot}><AppTile bg={bg} art={art} /></DockCell>)}
          <DockSep $w={6} />
          {dockMid.map(([id, bg, art, dot]) => <DockCell key={id} $dot={dot}><AppTile bg={bg} art={art} /></DockCell>)}
          <DockSep $w={6} />
          <DockCell><svg width="9" height="12" viewBox="0 0 9 12"><path d="M0 0h6l3 3v9H0z" fill="#e8e8e8" /><path d="M2 4h5M2 6h5M2 8h5" stroke="#aaa" strokeWidth=".7" /></svg></DockCell>
          {windowsMin.map((c, i) => (
            <DockCell key={i}><svg width="12" height="12" viewBox="0 0 12 12"><rect y="2" width="11" height="7" fill={i === 3 || i === 6 ? "#b5b5b7" : "#e9ebee"} /><path d="M1.500 4.500h6" stroke="#b3b6bb" strokeDasharray="2 1" /><circle cx="9.300" cy="9.300" r="2" fill={c} /></svg></DockCell>
          ))}
          <DockCell><svg width="10" height="12" viewBox="0 0 10 12"><path d="M0 0h9v12H0z" fill="#f0f1f4" /><path d="M1.500 2.500h5M1.500 5h4" stroke="#9aa6c2" /><circle cx="8" cy="9.500" r="2" fill="#2e8ae6" /></svg></DockCell>
          <DockCell><svg width="12" height="12" viewBox="0 0 12 12"><rect y="2" width="11" height="7" fill="#e9ebee" /><path d="M2 5h5" stroke="#b3b6bb" /><circle cx="9.300" cy="9.300" r="2" fill="#2e8ae6" /></svg></DockCell>
          <DockCell><svg width="10" height="12" viewBox="0 0 10 12"><path d="M0 1h10L8.500 12h-7z" fill="#dcdddf" /><path d="M1 2.500h8M3.500 4l.3 6M6.500 4l-.3 6" stroke="#b5b6b9" fill="none" /></svg></DockCell>
        </Dock>
      </GreenEdge>
      <Banner>
        <Viewing>
          <Slot $w={258}><Fit w={255}>You are viewing Rakshit Tandon's screen</Fit></Slot>
          <svg width="34" height="14" viewBox="0 0 34 14" fill="none"><path d="M3 12.500 12 1.500" stroke="#33531f" /><rect x="5.500" y="2" width="4" height="7" rx="2" fill="#33531f" /><path d="M3.500 7c0 5 8 5 8 0M7.500 11v2" stroke="#33531f" /><circle cx="26" cy="7.500" r="5" stroke="#5c7a33" strokeWidth="1.200" /><circle cx="26" cy="7.500" r="2.500" fill="#f0402c" /></svg>
        </Viewing>
        <ViewOptions>
          <Slot $w={87}><Fit w={83}>View Options</Fit></Slot>
          <svg width="11" height="6" viewBox="0 0 11 6" fill="none" stroke="#ddd" strokeWidth="2"><path d="M1 1c2.500 4 6.500 4 9 0" /></svg>
        </ViewOptions>
      </Banner>
    </Frame>
  );
}

/* ---------- taskbar ---------- */

const Taskbar = styled.footer`
  height: 40px;
  flex: none;
  display: flex;
  background: linear-gradient(90deg, #1e1e1e 0, #262626 390px, #2c2b2c 600px, #2d282a);
  color: #f3f3f3;
  font-size: 12px;
`;
const SearchBox = styled.div`
  width: 344px;
  flex: none;
  display: flex;
  align-items: center;
  padding: 1px 0 0 12px;
  background: #f1f1f1;
  border: 1px solid #bcbcbc;
  color: #333;
  font-size: 14.500px;
`;
const TaskButton = styled.div<{ $w: number; $open?: boolean; $on?: boolean }>`
  width: ${(p) => p.$w}px;
  flex: none;
  display: flex;
  align-items: center;
  justify-content: center;
  background: ${(p) => (p.$on ? "#555152" : "transparent")};
  box-shadow: ${(p) => (p.$open ? "inset 0 -2px #76b9ed" : "none")};
`;
const TwoLines = styled.div<{ $w: number }>`
  width: ${(p) => p.$w}px;
  flex: none;
  display: flex;
  flex-direction: column;
  align-items: center;
  padding-top: 2px;
  line-height: 17.500px;
`;
const Gauge = styled.div`
  width: 48px;
  height: 18px;
  margin-top: 11px;
  padding-left: 3px;
  flex: none;
  display: flex;
  align-items: center;
  justify-content: center;
  border: 2px solid #fff;
  background: linear-gradient(90deg, #16a34d 42%, #050505 42%);
  font: 400 13px/14px ${ui};
`;
const GaugeTip = styled.i`
  width: 2px;
  height: 9px;
  margin: 15px 25px 0 0;
  flex: none;
  background: #fff;
`;

const Chrome = ({ children }: { children?: React.ReactNode }) => (
  <svg width="26" height="26" viewBox="-1 -1 26 26">
    <circle cx="12" cy="12" r="11" fill="#36a852" />
    <path d="M2.500 6.500A11 11 0 0 1 21.500 6.500H12L7.500 14.500z" fill="#df4637" />
    <path d="M21.500 6.500A11 11 0 0 1 12 23l4.800-8.500L17 9.500 12 6.500z" fill="#fbcb2e" />
    <circle cx="12" cy="12" r="5.200" fill="#fff" /><circle cx="12" cy="12" r="4.200" fill="#4a83ee" />
    {children}
  </svg>
);

function WindowsBar() {
  return (
    <Taskbar>
      <TaskButton $w={48}>
        <svg width="16" height="17" viewBox="0 0 16 17" fill="#fff"><path d="M0 2.500 6.500 1.600V8H0zM7.500 1.400 16 .2V8H7.500zM0 9h6.500v6.400L0 14.500zM7.500 9H16v7.800l-8.500-1.200z" /></svg>
      </TaskButton>
      <SearchBox>
        <Slot $w={27}><svg width="17" height="17" viewBox="0 0 17 17" fill="none" stroke="#222" strokeWidth="1.300"><circle cx="10.500" cy="6" r="5" /><path d="m7 9.500-6.500 7" /></svg></Slot>
        <Fit w={128}>Type here to search</Fit>
      </SearchBox>
      <TaskButton $w={48}><svg width="16" height="16" viewBox="0 0 16 16"><circle cx="8" cy="8" r="6.800" fill="none" stroke="#f5f5f5" strokeWidth="2.200" /></svg></TaskButton>
      <TaskButton $w={48}>
        <svg width="17" height="16" viewBox="0 0 17 16" fill="none" stroke="#eee" strokeWidth="1.200"><path d="M1 0v2.500h10V0M1 4.500h10v7H1zM1 16v-2.500h10V16M14.500 0v16" /><rect x="13" y="4" width="3" height="3" fill="#fff" stroke="none" /></svg>
      </TaskButton>
      <Slot $w={7} />
      <TaskButton $w={40} $open>
        <svg width="22" height="20" viewBox="0 0 22 20"><path d="M0 1h9v3H0z" fill="#d99a1c" /><path d="M0 3h22v15H0z" fill="#fcd462" /><path d="M4 19V12a2 2 0 0 1 2-2h10a2 2 0 0 1 2 2v7h-4v-4.500H8V19z" fill="#3b8dd4" /></svg>
      </TaskButton>
      <Slot $w={5} />
      <TaskButton $w={48}><Chrome /></TaskButton>
      <TaskButton $w={49}>
        <svg width="20" height="20" viewBox="0 0 20 20" fill="none" stroke="#fff"><circle cx="10" cy="10" r="5.500" strokeWidth="2.600" /><circle cx="10" cy="10" r="8" strokeWidth="3" strokeDasharray="3 3.280" strokeDashoffset="1.500" /></svg>
      </TaskButton>
      <TaskButton $w={49}>
        <svg width="24" height="24" viewBox="0 0 24 24"><rect width="24" height="24" fill="#25a9d6" /><path d="M8 4h3l-2 14-3 1z" fill="#0b3c63" /><path d="M9 4h3.500v12H18v3.500H7z" fill="#fff" /></svg>
      </TaskButton>
      <TaskButton $w={49}>
        <svg width="24" height="24" viewBox="0 0 24 24"><path d="M4 2 24 1v14H4z" fill="#3fa6ee" /><path d="M4 2 24 1v4L4 13z" fill="#6cc0f7" /><path d="M4 15h20v1.500H8z" fill="#0e2c48" /><path d="m8.500 17 5.500 6" stroke="#b9a9a0" strokeWidth="2.500" /><circle cx="5.800" cy="14" r="5" fill="#a9cfea" stroke="#8796a3" strokeWidth="1.300" /></svg>
      </TaskButton>
      <TaskButton $w={48}>
        <svg width="22" height="24" viewBox="0 0 22 24"><path d="m1 1 20 1.500-1.500 14L4 15.500z" fill="#d8d8d4" /><path d="m2.500 2.500 17 1-1.300 11.300L5 13.500z" fill="#1826a6" /><circle cx="11" cy="8.500" r="4.300" fill="#3449d6" stroke="#b9c3f5" /><path d="m11.500 6-.8 5" stroke="#fff" strokeWidth="1.300" /><path d="m9 16 6 .5v4H9z" fill="#c8c8c2" /><ellipse cx="12.500" cy="20.500" rx="7.500" ry="2.700" fill="#d5d5cf" /></svg>
      </TaskButton>
      <TaskButton $w={51}>
        <svg width="22" height="24" viewBox="0 0 22 24"><path d="M1 1.500h18V23H1z" fill="#f4f4ee" stroke="#999" strokeWidth=".6" /><path d="M1 15h18v8H1z" fill="#8ccc28" /><path d="M3 20h12" stroke="#e6f6c2" /><path d="M5.500 7v6M5.500 10h2.500M10 10h3" stroke="#333" strokeWidth="1.300" /><path d="M20.500 1.500 14 13" stroke="#e4a42a" strokeWidth="2.800" /><path d="M1 1.500h18" stroke="#777" strokeDasharray="1.500 1" /></svg>
      </TaskButton>
      <TaskButton $w={48} $open $on>
        <Chrome>
          <circle cx="17.500" cy="17.500" r="7.300" fill="#f8bbd0" /><circle cx="14.500" cy="17.500" r="2.600" fill="#4a4246" /><circle cx="20.500" cy="17.500" r="2.600" fill="#4a4246" />
        </Chrome>
      </TaskButton>
      <Slot $w={5} />
      <TaskButton $w={40} $open>
        <svg width="24" height="22" viewBox="0 0 24 22"><path d="M9 2 21 1l1 19-5-1z" fill="#e8e6d8" /><path d="M8 2 20 1 16 20 1 18z" fill="#6fb3c0" /><path d="M8 2 14 1.500 7 19l-6-1z" fill="#a9dbe2" /><path d="M8 2 20 1" stroke="#ddd" strokeWidth="1.500" strokeDasharray="1 1" /></svg>
      </TaskButton>
      <Slot $w={119} />
      <Gauge>43%</Gauge>
      <GaugeTip />
      <svg width="90" height="40" viewBox="0 0 90 40" fill="none" stroke="#f3f3f3" strokeWidth="1.200">
        <path d="m2.500 23 5.500-5.500 5.500 5.500" />
        <g stroke="#aaa"><path d="M28 25C27 18 32 13 39 14.500" /></g>
        <path d="M30.500 26c-.5-5 3.500-9 8.500-8M33.500 26.500c-.5-3.500 2-6 5.500-5.500" /><circle cx="37.500" cy="25.500" r="1.200" fill="#fff" />
        <path d="M49.500 16.500h12v8h-12zM63 19v3" /><rect x="51.500" y="18.500" width="3" height="4" fill="#fff" stroke="none" />
        <path d="M72.500 18.500H75l3.500-3.500v11L75 22.500h-2.500zM80.500 18c1.300 1.500 1.300 3.500 0 5M83 16c2.300 3 2.300 6 0 9" /><path d="M85.500 14.500c3 3.500 3 8.500 0 12" stroke="#777" />
      </svg>
      <TwoLines $w={39}><Fit w={23}>ENG</Fit><Fit w={11}>IN</Fit></TwoLines>
      <TwoLines $w={61}><Fit w={44}>9:45 AM</Fit><Fit w={52}>6/24/2021</Fit></TwoLines>
      <Slot $w={51}>
        <svg width="41" height="40" viewBox="0 0 41 40" fill="none" stroke="#f3f3f3" strokeWidth="1.200"><path d="M14.500 12.500h15v12h-5L22 27.500l-2.500-3h-5z" /></svg>
      </Slot>
      <svg width="1" height="40"><rect width="1" height="40" fill="#6e6b6c" /></svg>
    </Taskbar>
  );
}

export default function App() {
  return (
    <Page>
      <Global />
      <Tabs />
      <AddressBar />
      <Bookmarks />
      <Stage>
        <RecColumn><RecDot /><Fit w={18}>REC</Fit></RecColumn>
        <SharedScreen />
      </Stage>
      <WindowsBar />
    </Page>
  );
}
